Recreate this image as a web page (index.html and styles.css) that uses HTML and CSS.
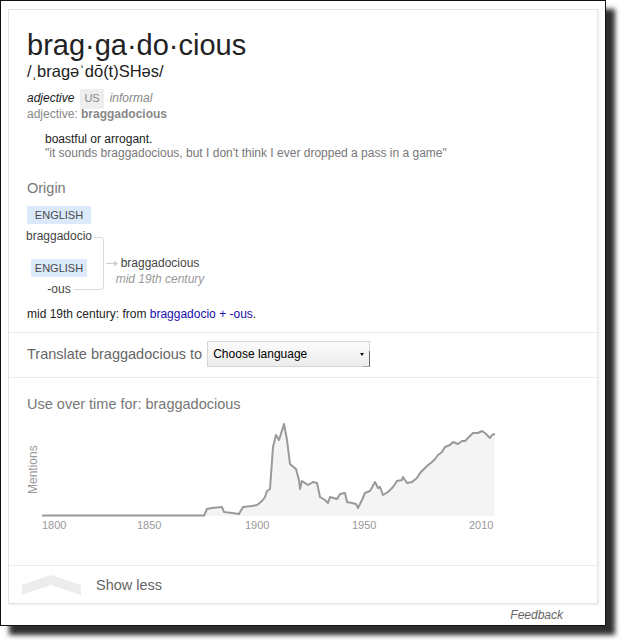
FILE: index.html
```html
<!DOCTYPE html>
<html>
<head>
<meta charset="utf-8">
<link rel="stylesheet" href="styles.css">
</head>
<body>
<div class="frame">
  <div class="card">
    <section class="sec-def">
      <h1 class="word">brag·ga·do·cious</h1>
      <div class="pron">/ˌbragəˈdō(t)SHəs/</div>
      <div class="meta"><span class="pos">adjective</span><span class="tag">US</span><span class="reg">informal</span></div>
      <div class="forms">adjective: <b>braggadocious</b></div>
      <div class="def">
        <div class="gloss">boastful or arrogant.</div>
        <div class="ex">"it sounds braggadocious, but I don't think I ever dropped a pass in a game"</div>
      </div>
      <h2 class="sub origin">Origin</h2>
      <div class="etym">
        <svg class="etym-lines" width="120" height="91" viewBox="0 0 120 91">
          <path d="M66,31.5 H74 Q76.5,31.5 76.5,34 V81 Q76.5,83.5 74,83.5 H47" fill="none" stroke="#dcdcdc" stroke-width="1"/>
          <path d="M79,57.5 H88" fill="none" stroke="#cfcfcf" stroke-width="1"/>
          <polygon points="87,54.5 91,57.5 87,60.5" fill="#cfcfcf"/>
        </svg>
        <div class="etym-src">
          <span class="lang lang-wide">ENGLISH</span>
          <span class="src">braggadocio</span>
          <span class="lang lang-second">ENGLISH</span>
          <span class="src">-ous</span>
        </div>
        <div class="etym-out">
          <span class="out-word">braggadocious</span>
          <span class="era">mid 19th century</span>
        </div>
      </div>
      <div class="etym-text">mid 19th century: from <a class="lnk">braggadocio</a> <span class="lnk">+</span> <a class="lnk">-ous</a>.</div>
    </section>

    <section class="sec-trans">
      <span class="trans-label">Translate braggadocious to</span>
      <div class="select"><span>Choose language</span><span class="caret"></span></div>
    </section>

    <section class="sec-usage">
      <h2 class="sub">Use over time for: braggadocious</h2>
      <div class="chart">
        <div class="mentions">Mentions</div>
        <svg class="plot" width="453" height="114" viewBox="42 418 453 114">
          <path class="area" d="M42,516 L204,516 L207,509 L212,508 L222,507 L224,512 L232,513 L239,514 L243,507 L252,506 L257,505 L262,501 L265,497 L267,491 L270,489 L273,447 L276,435 L279,440 L284,424 L287,440 L290,464 L296,469 L299,480 L300,489 L302,481 L308,485 L313,482 L317,483 L320,497 L325,500 L328,503 L330,497 L337,499 L340,494 L345,493 L347,502 L352,503 L356,504 L358,508 L362,500 L365,493 L370,491 L375,482 L378,488 L380,487 L383,495 L388,492 L393,487 L397,481 L402,480 L403,477 L407,483 L412,482 L417,478 L420,473 L423,470 L427,466 L432,462 L435,459 L438,455 L442,452 L445,447 L450,445 L453,442 L458,444 L462,441 L465,441 L470,436 L473,433 L478,433 L482,431 L485,433 L490,438 L492,435 L495,434 L495,516 Z" fill="#f4f4f4"/>
          <polyline class="line" points="42,515.5 204,515.5 207,509 212,508 222,507 224,512 232,513 239,514 243,507 252,506 257,505 262,501 265,497 267,491 270,489 273,447 276,435 279,440 284,424 287,440 290,464 296,469 299,480 300,489 302,481 308,485 313,482 317,483 320,497 325,500 328,503 330,497 337,499 340,494 345,493 347,502 352,503 356,504 358,508 362,500 365,493 370,491 375,482 378,488 380,487 383,495 388,492 393,487 397,481 402,480 403,477 407,483 412,482 417,478 420,473 423,470 427,466 432,462 435,459 438,455 442,452 445,447 450,445 453,442 458,444 462,441 465,441 470,436 473,433 478,433 482,431 485,433 490,438 492,435 495,434" fill="none" stroke="#999" stroke-width="2" stroke-linejoin="round"/>
          <text class="axis" x="42" y="529">1800</text>
          <text class="axis" x="137" y="529">1850</text>
          <text class="axis" x="245" y="529">1900</text>
          <text class="axis" x="352" y="529">1950</text>
          <text class="axis" x="469" y="529">2010</text>
        </svg>
      </div>
    </section>

    <section class="sec-more">
      <svg class="chev" width="60" height="22" viewBox="0 0 60 22">
        <polygon points="0,11 29,1 59,11 59,21 29,11 0,21" fill="#ececec"/>
      </svg>
      <span class="more-label">Show less</span>
    </section>
  </div>
  <div class="feedback">Feedback</div>
</div>
</body>
</html>
```

FILE: styles.css
```css
body {
  margin: 0;
  padding-bottom: 14px;
  background: #fff;
  font-family: "Liberation Sans", Arial, sans-serif;
  color: #222;
}

.frame {
  box-sizing: border-box;
  width: 606px;
  height: 626px;
  border: 1px solid #111;
  padding: 8px 6px 0 7px;
  background: #fff;
  box-shadow: 9px 9px 5px rgba(0, 0, 0, 0.82);
}

.card {
  box-sizing: border-box;
  width: 590px;
  height: 595px;
  border: 1px solid #e4e4e4;
  box-shadow: 1px 1px 2px rgba(0, 0, 0, 0.08);
  display: flex;
  flex-direction: column;
  background: #fff;
}

.sec-def {
  padding: 19px 18px 10px;
}

.word {
  margin: 0;
  font-size: 29px;
  line-height: 32px;
  font-weight: normal;
  color: #222;
}

.pron {
  font-size: 16.5px;
  line-height: 20px;
  color: #222;
}

.meta {
  margin-top: 8px;
  height: 17px;
  display: flex;
  align-items: baseline;
  gap: 6px;
  font-size: 12px;
  line-height: 17px;
}

.pos {
  font-style: italic;
  color: #222;
}

.tag {
  font-size: 11px;
  line-height: 16px;
  padding: 1px 4px 3px;
  background: #eee;
  color: #888;
}

.reg {
  font-style: italic;
  color: #878787;
}

.forms {
  font-size: 12px;
  line-height: 17px;
  color: #878787;
}

.def {
  margin: 9px 0 0 18px;
  font-size: 12px;
  line-height: 14px;
}

.gloss {
  color: #222;
}

.ex {
  color: #777;
}

.sub {
  margin: 0;
  font-size: 14.5px;
  line-height: 20px;
  font-weight: normal;
  color: #777;
}

.origin {
  margin-top: 18px;
}

.etym {
  position: relative;
  margin-top: 8px;
  height: 91px;
  display: flex;
  font-size: 12px;
}

.etym-lines {
  position: absolute;
  left: 0;
  top: 0;
}

.etym-src {
  width: 64px;
  display: flex;
  flex-direction: column;
  align-items: center;
}

.lang {
  font-size: 11px;
  line-height: 18px;
  height: 18px;
  background: #dbe9fa;
  color: #4a4a4a;
  padding: 0 4px;
}

.lang-wide {
  padding: 0 8px;
}

.lang-second {
  margin-top: 15px;
}

.src {
  margin-top: 4px;
  line-height: 16px;
  color: #444;
  white-space: nowrap;
}

.etym-out {
  width: 86px;
  margin: 49px 0 0 26px;
  display: flex;
  flex-direction: column;
  align-items: center;
  line-height: 16px;
  white-space: nowrap;
}

.out-word {
  color: #444;
}

.era {
  font-style: italic;
  color: #999;
}

.etym-text {
  margin-top: 9px;
  font-size: 12px;
  line-height: 16px;
  color: #222;
}

.lnk {
  color: #1a0dab;
  text-decoration: none;
}

.sec-trans {
  border-top: 1px solid #ebebeb;
  padding: 8px 18px 10px;
  display: flex;
  align-items: center;
  gap: 5px;
}

.trans-label {
  font-size: 14.5px;
  line-height: 20px;
  color: #666;
}

.select {
  position: relative;
  box-sizing: border-box;
  width: 163px;
  height: 26px;
  border: 1px solid #d6d6d6;
  background: linear-gradient(#fbfbfb, #ececec);
  font-size: 12px;
  color: #000;
  padding: 0 5px 0 5px;
  display: flex;
  align-items: center;
  justify-content: space-between;
}

.caret {
  width: 0;
  height: 0;
  border-left: 2.5px solid transparent;
  border-right: 2.5px solid transparent;
  border-top: 3px solid #111;
}

.select::after {
  content: "";
  position: absolute;
  right: -1px;
  bottom: -1px;
  width: 6px;
  height: 15px;
  border-right: 1px solid #666;
  border-bottom: 1px solid #aaa;
}

.sec-usage {
  border-top: 1px solid #ebebeb;
  padding: 16px 18px 33px;
}

.chart {
  margin-top: 4px;
  display: flex;
  height: 114px;
}

.mentions {
  writing-mode: vertical-rl;
  transform: rotate(180deg);
  font-size: 12px;
  line-height: 13px;
  width: 13px;
  height: 49px;
  margin: 27px 2px 0 0;
  color: #999;
}

.plot {
  display: block;
}

.axis {
  font-family: "Liberation Sans", Arial, sans-serif;
  font-size: 11px;
  fill: #999;
}

.sec-more {
  border-top: 1px solid #ebebeb;
  flex: 1;
  display: flex;
  align-items: center;
  padding-left: 13px;
}

.chev {
  display: block;
  margin-right: 14px;
}

.more-label {
  font-size: 14.5px;
  color: #666;
}

.feedback {
  margin-top: 3px;
  padding-right: 36px;
  text-align: right;
  font-size: 12px;
  line-height: 16px;
  font-style: italic;
  color: #666;
}
```
